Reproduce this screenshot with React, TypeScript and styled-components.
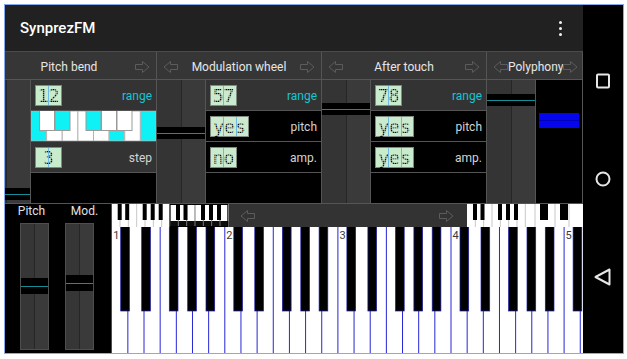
import React, { useLayoutEffect, useRef } from "react";
import styled, { createGlobalStyle } from "styled-components";

const Global = createGlobalStyle`
  html, body { margin: 0; padding: 0; background: #ffffff; }
  body { font-family: Roboto, "Noto Sans", "Liberation Sans", sans-serif; }
`;

const Frame = styled.div`
  margin: 4px 0 0 4px;
  width: 620px;
  height: 350px;
  box-sizing: border-box;
  border: 1px solid #86a8ee;
  display: flex;
  background: #000;
  overflow: hidden;
`;

const Main = styled.div`
  width: 578px;
  display: flex;
  flex-direction: column;
`;

const AppBar = styled.header`
  height: 46px;
  flex-shrink: 0;
  background: #212121;
  display: flex;
  align-items: center;
  justify-content: space-between;
  padding: 0 21px 0 15px;
`;

const Title = styled.h1`
  margin: 0;
  font-size: 15px;
  font-weight: 500;
  color: #ffffff;
`;

const Kebab = styled.div`
  display: flex;
  flex-direction: column;
  gap: 3px;
`;

const Dot = styled.span`
  width: 3px;
  height: 3px;
  border-radius: 50%;
  background: #f2f2f2;
`;

const Strip = styled.div`
  height: 153px;
  flex-shrink: 0;
  box-sizing: border-box;
  border-top: 1px solid #4b4b4b;
  border-bottom: 1px solid #555;
  display: flex;
  overflow: hidden;
`;

const Section = styled.section<{ $w: number }>`
  width: ${(p) => p.$w}px;
  flex-shrink: 0;
  box-sizing: border-box;
  border-right: 1px solid #555;
  display: flex;
  flex-direction: column;
`;

const Header = styled.div`
  height: 28px;
  box-sizing: border-box;
  border-bottom: 1px solid #555;
  background: #363636;
  display: flex;
  align-items: center;
  padding: 2px 6px 0 6px;
`;

const HeaderLabel = styled.span`
  flex: 1;
  text-align: center;
  font-size: 12px;
  color: #e6e6e6;
  white-space: nowrap;
  padding-top: 1px;
`;

const ArrowSvg = styled.svg`
  flex-shrink: 0;
  display: block;
`;

const Body = styled.div`
  flex: 1;
  display: flex;
  min-height: 0;
`;

const SliderCol = styled.div`
  width: 49px;
  flex-shrink: 0;
  box-sizing: border-box;
  border-right: 1px solid #555;
  position: relative;
  background: linear-gradient(
    90deg,
    #343434 0,
    #343434 24px,
    #262626 24px,
    #262626 25px,
    #3a3a3a 25px
  );
`;

const Thumb = styled.div<{ $h: number }>`
  position: absolute;
  left: 0;
  right: 0;
  height: ${(p) => p.$h}px;
  background: #000;
  &::after {
    content: "";
    position: absolute;
    left: 0;
    right: 0;
    top: 50%;
    height: 1px;
    background: #148d96;
  }
`;

const ParamList = styled.div`
  flex: 1;
  display: flex;
  flex-direction: column;
  gap: 1px;
  background: #555;
`;

const Row = styled.div<{ $active?: boolean }>`
  height: 30px;
  flex-shrink: 0;
  display: flex;
  align-items: center;
  justify-content: space-between;
  padding: 0 4px;
  background: ${(p) => (p.$active ? "#333333" : "#000000")};
`;

const KeyRow = styled.div`
  height: 30px;
  flex-shrink: 0;
  display: flex;
  background: #fff;
`;

const Label = styled.span<{ $accent?: boolean }>`
  font-size: 12px;
  padding-top: 1px;
  color: ${(p) => (p.$accent ? "#12c6d2" : "#d4d4d4")};
`;

const Lcd = styled.div<{ $w: number }>`
  position: relative;
  width: ${(p) => p.$w}px;
  height: 21px;
  box-sizing: border-box;
  border: 1px solid #7f8a80;
  background-color: #cdeacf;
  color: #0a0a12;
  font-family: "DejaVu Sans Mono", "Liberation Mono", monospace;
  font-size: 18px;
  line-height: 19px;
  text-align: center;
  white-space: nowrap;
  &::after {
    content: "";
    position: absolute;
    inset: 0;
    background-image: linear-gradient(
        90deg,
        transparent 12px,
        rgba(80, 170, 235, 0.75) 12px,
        rgba(80, 170, 235, 0.75) 13px,
        transparent 13px
      ),
      linear-gradient(rgba(200, 235, 205, 0.55) 1px, transparent 1px),
      linear-gradient(90deg, rgba(200, 235, 205, 0.55) 1px, transparent 1px);
    background-size: 13px 100%, 2px 2px, 2px 2px;
  }
`;

const PolyMeter = styled.div`
  flex: 1;
  background: #000;
  padding: 33px 3px 0 3px;
  display: flex;
  flex-direction: column;
`;

const PolyBar = styled.div`
  height: 7px;
  background: #0505ee;
  & + & {
    border-top: 1px solid #0000b4;
  }
`;

const Bottom = styled.div`
  height: 149px;
  flex-shrink: 0;
  display: flex;
`;

const WheelPanel = styled.div`
  width: 106px;
  flex-shrink: 0;
  background: #000;
  display: flex;
  flex-direction: column;
`;

const WheelLabels = styled.div`
  display: grid;
  grid-template-columns: 53px 53px;
  height: 15px;
  line-height: 15px;
  font-size: 12px;
  color: #e2e2e2;
  text-align: center;
`;

const Tracks = styled.div`
  display: flex;
  gap: 16px;
  padding-left: 15px;
  margin-top: 4px;
`;

const Track = styled.div`
  position: relative;
  width: 29px;
  height: 127px;
  box-sizing: border-box;
  border: 1px solid #4e4e4e;
  background: linear-gradient(
    90deg,
    #363636 0,
    #363636 13px,
    #262626 13px,
    #262626 14px,
    #3a3a3a 14px
  );
`;

const KeyboardArea = styled.div`
  width: 472px;
  flex-shrink: 0;
  display: flex;
  flex-direction: column;
`;

const MiniStrip = styled.div`
  height: 23px;
  display: flex;
`;

const ScrollBar = styled.div`
  flex: 1;
  background: #333;
  display: flex;
  align-items: center;
  justify-content: space-between;
  padding: 0 13px 0 11px;
`;

const NavBar = styled.nav`
  width: 40px;
  flex-shrink: 0;
  background: #000;
  display: flex;
  flex-direction: column;
  align-items: center;
  justify-content: center;
  gap: 78px;
`;

const NavIcon = styled.svg`
  display: block;
`;

function Arrow({ dir }: { dir: "left" | "right" }) {
  const pts =
    dir === "right"
      ? "0.5,3.5 7.5,3.5 7.5,0.5 14,6 7.5,11.5 7.5,8.5 0.5,8.5"
      : "14.5,3.5 7.5,3.5 7.5,0.5 1,6 7.5,11.5 7.5,8.5 14.5,8.5";
  return (
    <ArrowSvg width="15" height="12" viewBox="0 0 15 12">
      <polygon points={pts} fill="none" stroke="#5c5c5c" strokeWidth="1" />
    </ArrowSvg>
  );
}

function StepKeyboard() {
  const w = 125 / 8;
  const whiteSel = [0, 5, 7];
  const blacks = [
    { x: 8, sel: false },
    { x: 23.5, sel: true },
    { x: 54.5, sel: true },
    { x: 70, sel: false },
    { x: 85.5, sel: false },
  ];
  return (
    <svg width="125" height="30" viewBox="0 0 125 30">
      {Array.from({ length: 8 }).map((_, i) => (
        <rect
          key={i}
          x={i * w}
          y={0}
          width={w}
          height={30}
          fill={whiteSel.includes(i) ? "#0ef2f6" : "#ffffff"}
          stroke="#b4b4b4"
          strokeWidth="1"
        />
      ))}
      {blacks.map((b, i) => (
        <rect
          key={i}
          x={b.x + 0.5}
          y={-0.5}
          width={15}
          height={20}
          fill={b.sel ? "#0ef2f6" : "#ffffff"}
          stroke="#9a9a9a"
          strokeWidth="1"
        />
      ))}
    </svg>
  );
}

const miniBlack = [6, 13.5, 31, 39, 47];

function MiniLeft() {
  const ow = 58.3;
  const ww = ow / 7;
  return (
    <svg width="118" height="23" viewBox="0 0 118 23">
      <rect x="0.7" y="0" width="117" height="23" fill="#fff" />
      <rect x={0.7 + ow} y="17" width={ow} height="6" fill="#0c0c0c" />
      {Array.from({ length: 13 }).map((_, i) => (
        <line
          key={i}
          x1={0.7 + (i + 1) * ww}
          x2={0.7 + (i + 1) * ww}
          y1="0"
          y2="23"
          stroke={i >= 6 ? "#7a7a7a" : "#c8c8c8"}
          strokeWidth="1"
        />
      ))}
      {[0, 1].map((o) =>
        miniBlack.map((b, i) => (
          <rect key={`${o}-${i}`} x={0.7 + o * ow + b} y="0" width="4" height="16" fill="#000" />
        ))
      )}
      <rect x={0.7 + ow} y="0.5" width={ow - 0.5} height="22" fill="none" stroke="#000" strokeWidth="1" />
    </svg>
  );
}

function MiniRight() {
  const ow = 58.3;
  const ww = ow / 7;
  return (
    <svg width="116" height="23" viewBox="0 0 116 23">
      <rect x="0" y="0" width="116" height="23" fill="#fff" />
      {Array.from({ length: 7 }).map((_, i) => (
        <line key={i} x1={(i + 1) * ww} x2={(i + 1) * ww} y1="0" y2="23" stroke="#c8c8c8" strokeWidth="1" />
      ))}
      {[68, 88, 102].map((x) => (
        <line key={x} x1={x} x2={x} y1="0" y2="23" stroke="#c8c8c8" strokeWidth="1" />
      ))}
      {miniBlack.map((b, i) => (
        <rect key={i} x={b} y="0" width="4" height="16" fill="#000" />
      ))}
      <rect x="73" y="0" width="8" height="16" fill="#000" />
      <rect x="93" y="0" width="8" height="16" fill="#000" />
    </svg>
  );
}

const mainBlack = [9, 30, 57.6, 76, 94.3];

function MainKeyboard() {
  const ow = 113.1;
  const ww = ow / 7;
  const x0 = 0.7;
  return (
    <svg width="472" height="126" viewBox="0 0 472 126">
      <rect x={x0} y="0" width="472" height="126" fill="#fff" />
      {Array.from({ length: 30 }).map((_, k) => {
        const x = x0 + (k + 1) * ww;
        return <line key={k} x1={x} x2={x} y1="0" y2="126" stroke="#2626d6" strokeWidth="1" />;
      })}
      {[0, 1, 2, 3, 4].map((o) =>
        mainBlack.map((b, i) => (
          <rect
            key={`${o}-${i}`}
            x={x0 + o * ow + b}
            y="-1"
            width="8.7"
            height="85"
            fill="#000"
            stroke="#1c1ca8"
            strokeWidth="0.7"
          />
        ))
      )}
      {[0, 1, 2, 3, 4].map((o) => (
        <text
          key={o}
          x={x0 + o * ow + 1.5}
          y="12"
          fontSize="11"
          fontFamily="Roboto, sans-serif"
          fill="#3a3a3a"
        >
          {o + 1}
        </text>
      ))}
    </svg>
  );
}

type ParamRow =
  | { kind: "value"; lcd: string; label: string; active?: boolean; accent?: boolean }
  | { kind: "keys" }
  | { kind: "empty" };

type SectionDef = {
  title: string;
  width: number;
  thumb: number;
  rows?: ParamRow[];
  poly?: boolean;
};

const sections: SectionDef[] = [
  {
    title: "Pitch bend",
    width: 175,
    thumb: 108,
    rows: [
      { kind: "value", lcd: "12", label: "range", active: true, accent: true },
      { kind: "keys" },
      { kind: "value", lcd: "3", label: "step", active: true },
      { kind: "empty" },
    ],
  },
  {
    title: "Modulation wheel",
    width: 165,
    thumb: 47,
    rows: [
      { kind: "value", lcd: "57", label: "range", active: true, accent: true },
      { kind: "value", lcd: "yes", label: "pitch" },
      { kind: "value", lcd: "no", label: "amp." },
      { kind: "empty" },
    ],
  },
  {
    title: "After touch",
    width: 165,
    thumb: 23,
    rows: [
      { kind: "value", lcd: "78", label: "range", active: true, accent: true },
      { kind: "value", lcd: "yes", label: "pitch" },
      { kind: "value", lcd: "yes", label: "amp." },
      { kind: "empty" },
    ],
  },
  { title: "Polyphony", width: 96, thumb: 14, poly: true },
];

function renderRow(r: ParamRow, i: number) {
  if (r.kind === "keys")
    return (
      <KeyRow key={i}>
        <StepKeyboard />
      </KeyRow>
    );
  if (r.kind === "empty") return <Row key={i} />;
  return (
    <Row key={i} $active={r.active}>
      <Lcd $w={r.lcd.length > 2 ? 39 : 27}>{r.lcd}</Lcd>
      <Label $accent={r.accent}>{r.label}</Label>
    </Row>
  );
}

export default function App() {
  const stripRef = useRef<HTMLDivElement>(null);
  useLayoutEffect(() => {
    if (stripRef.current) stripRef.current.scrollLeft = 23;
  }, []);

  return (
    <>
      <Global />
      <Frame>
        <Main>
          <AppBar>
            <Title>SynprezFM</Title>
            <Kebab>
              <Dot />
              <Dot />
              <Dot />
            </Kebab>
          </AppBar>
          <Strip ref={stripRef}>
            {sections.map((s) => (
              <Section key={s.title} $w={s.width}>
                <Header>
                  <Arrow dir="left" />
                  <HeaderLabel>{s.title}</HeaderLabel>
                  <Arrow dir="right" />
                </Header>
                <Body>
                  <SliderCol>
                    <Thumb $h={12} style={{ top: s.thumb }} />
                  </SliderCol>
                  {s.poly ? (
                    <PolyMeter>
                      <PolyBar />
                      <PolyBar />
                    </PolyMeter>
                  ) : (
                    <ParamList>{s.rows!.map(renderRow)}</ParamList>
                  )}
                </Body>
              </Section>
            ))}
          </Strip>
          <Bottom>
            <WheelPanel>
              <WheelLabels>
                <span>Pitch</span>
                <span>Mod.</span>
              </WheelLabels>
              <Tracks>
                <Track>
                  <Thumb $h={16} style={{ top: 54 }} />
                </Track>
                <Track>
                  <Thumb $h={16} style={{ top: 51 }} />
                </Track>
              </Tracks>
            </WheelPanel>
            <KeyboardArea>
              <MiniStrip>
                <MiniLeft />
                <ScrollBar>
                  <Arrow dir="left" />
                  <Arrow dir="right" />
                </ScrollBar>
                <MiniRight />
              </MiniStrip>
              <MainKeyboard />
            </KeyboardArea>
          </Bottom>
        </Main>
        <NavBar>
          <NavIcon width="20" height="20" viewBox="0 0 20 20">
            <rect x="4" y="3.5" width="12" height="13" rx="1" fill="none" stroke="#e6e6e6" strokeWidth="2" />
          </NavIcon>
          <NavIcon width="20" height="20" viewBox="0 0 20 20">
            <circle cx="10" cy="10" r="6.5" fill="none" stroke="#e6e6e6" strokeWidth="2" />
          </NavIcon>
          <NavIcon width="20" height="20" viewBox="0 0 20 20">
            <polygon points="2.5,10 16.5,2.5 16.5,17.5" fill="none" stroke="#e6e6e6" strokeWidth="2" strokeLinejoin="round" />
          </NavIcon>
        </NavBar>
      </Frame>
    </>
  );
}
